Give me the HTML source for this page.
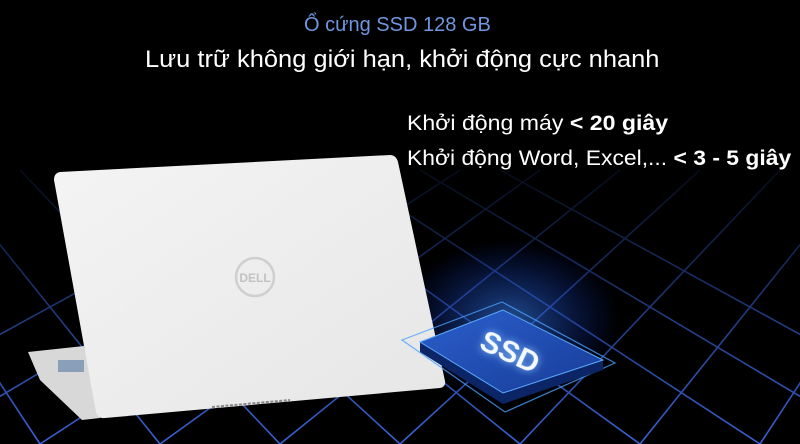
<!DOCTYPE html>
<html><head><meta charset="utf-8"><style>
html,body{margin:0;padding:0;background:#000;}
#w{position:relative;width:800px;height:444px;overflow:hidden;background:#000;font-family:"Liberation Sans",sans-serif;}
svg{position:absolute;left:0;top:0}
.t{position:absolute;white-space:nowrap;line-height:1;transform-origin:0 0}
</style></head><body><div id="w">
<svg width="800" height="444" viewBox="0 0 800 444">
<defs>
<linearGradient id="fade" x1="0" y1="0" x2="0" y2="1">
<stop offset="0.3" stop-color="#fff" stop-opacity="0"/>
<stop offset="0.55" stop-color="#fff" stop-opacity="0.35"/>
<stop offset="1" stop-color="#fff" stop-opacity="1"/>
</linearGradient>
<mask id="m"><rect width="800" height="444" fill="url(#fade)"/></mask>
<radialGradient id="glow" cx="0.5" cy="0.5" r="0.5">
<stop offset="0" stop-color="#3d8bff" stop-opacity="0.55"/>
<stop offset="1" stop-color="#1040ff" stop-opacity="0"/>
</radialGradient>
<linearGradient id="lid" x1="0" y1="0" x2="1" y2="1">
<stop offset="0" stop-color="#f4f4f4"/><stop offset="1" stop-color="#e6e6e6"/>
</linearGradient>
<linearGradient id="chip" x1="0" y1="0" x2="1" y2="1">
<stop offset="0" stop-color="#2b5fcc"/><stop offset="1" stop-color="#173c98"/>
</linearGradient>
</defs>
<g mask="url(#m)" stroke="#3a62d8" stroke-width="1.6" fill="none">
<path d="M-200 444 L300 170 M-80 444 L380 170 M40 444 L460 170 M160 444 L540 170 M280 444 L620 170 M400 444 L700 170 M520 444 L780 170 M640 444 L860 170 M760 444 L940 170 M880 444 L1020 170"/>
<path d="M1000 444 L500 170 M880 444 L420 170 M760 444 L340 170 M640 444 L260 170 M520 444 L180 170 M400 444 L100 170 M280 444 L20 170 M160 444 L-60 170 M40 444 L-140 170 M-80 444 L-220 170"/>
</g>
<ellipse cx="510" cy="320" rx="110" ry="80" fill="url(#glow)"/>
<path d="M28 352 L84 346 L100 418 L82 420 L40 380 Z" fill="#d8d8d8"/>
<rect x="58" y="360" width="26" height="12" fill="#8aa0b8"/>
<path d="M60 172 Q54 173 54 180 L96 412 Q98 419 105 418 L440 388 Q446 387 445 381 L398 162 Q396 155 390 155 Z" fill="url(#lid)"/>
<circle cx="255" cy="277" r="19" fill="none" stroke="#cfcfcf" stroke-width="2.5"/>
<text x="255" y="282" font-family="Liberation Sans" font-size="12" font-weight="bold" fill="#c2c2c2" text-anchor="middle">DELL</text>
<path d="M212 407 L290 400" stroke="#888" stroke-width="2" stroke-dasharray="3 1.5"/>
<path d="M402 340 L502 302 L615 363 L505 412 Z" fill="none" stroke="#4aa0ff" stroke-width="1.2" opacity="0.8"/>
<path d="M420 342 L420 352 L503 404 L603 370 L603 360 L503 393 Z" fill="#0c2566"/>
<path d="M420 342 L503 310 L603 360 L503 393 Z" fill="url(#chip)" stroke="#5aaaff" stroke-width="1"/>
<text x="510" y="362" font-family="Liberation Sans" font-size="30" font-weight="bold" fill="#f4f8ff" text-anchor="middle" transform="rotate(25 510 352)" style="filter:drop-shadow(0 0 4px #8cc8ff)">SSD</text>
</svg>
<div class="t" style="left:304px;top:15px;font-size:20px;color:#6f96e0">Ổ cứng SSD 128 GB</div>
<div class="t" style="left:145px;top:48px;font-size:24px;color:#fff;transform:scaleX(1.06)">Lưu trữ không giới hạn, khởi động cực nhanh</div>
<div class="t" style="left:407px;top:113px;font-size:21px;color:#fff;transform:scaleX(1.1)">Khởi động máy <b>&lt; 20 giây</b></div>
<div class="t" style="left:407px;top:148px;font-size:21px;color:#fff;transform:scaleX(1.09)">Khởi động Word, Excel,... <b>&lt; 3 - 5 giây</b></div>
</div></body></html>
